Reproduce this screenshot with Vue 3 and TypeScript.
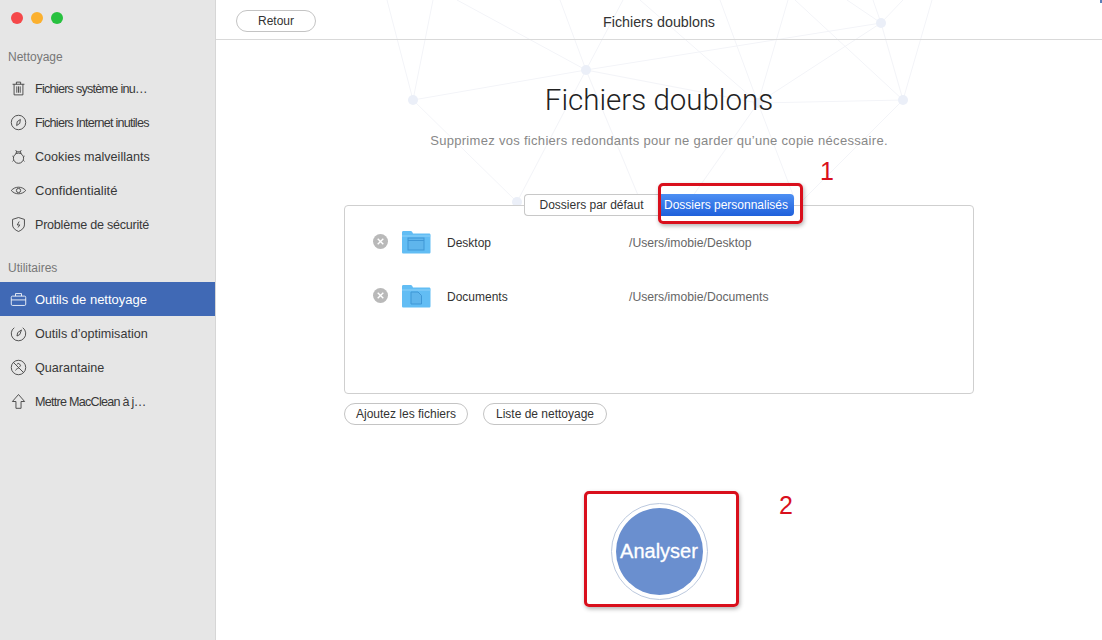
<script setup lang="ts">
interface NavItem {
  label: string
  icon: string
  fit?: string
  active?: boolean
}

const cleanItems: NavItem[] = [
  { label: 'Fichiers système inu…', icon: 'trash', fit: 'tight' },
  { label: 'Fichiers Internet inutiles', icon: 'compass', fit: 'tight' },
  { label: 'Cookies malveillants', icon: 'bug' },
  { label: 'Confidentialité', icon: 'eye', fit: 'wide' },
  { label: 'Problème de sécurité', icon: 'shield', fit: 'snug' },
]

const toolItems: NavItem[] = [
  { label: 'Outils de nettoyage', icon: 'case', active: true },
  { label: 'Outils d’optimisation', icon: 'gauge' },
  { label: 'Quarantaine', icon: 'quarantine' },
  { label: 'Mettre MacClean à j…', icon: 'up', fit: 'tight' },
]

const folders = [
  { name: 'Desktop', path: '/Users/imobie/Desktop', kind: 'desktop' },
  { name: 'Documents', path: '/Users/imobie/Documents', kind: 'doc' },
]

const nodes = [
  [413, 100], [586, 70], [881, 23], [903, 100], [758, 103], [517, 202],
]

const links = [
  [413, 100, 586, 70], [586, 70, 881, 23], [586, 70, 758, 103], [413, 100, 387, 0],
  [413, 100, 433, 0], [586, 70, 457, 0], [586, 70, 560, 0], [586, 70, 623, 0],
  [586, 70, 517, 202], [586, 70, 640, 200], [413, 100, 517, 202], [758, 103, 881, 23],
  [758, 103, 903, 100], [758, 103, 640, 0], [758, 103, 720, 0], [758, 103, 788, 0],
  [881, 23, 903, 100], [903, 100, 932, 0], [881, 23, 873, 0], [881, 23, 903, 0],
  [881, 23, 847, 0], [903, 100, 795, 0], [903, 100, 803, 200], [758, 103, 795, 200],
  [758, 103, 690, 200],
]
</script>

<template>
  <div class="window">
    <aside class="sidebar">
      <div class="lights">
        <span class="light red"></span>
        <span class="light amber"></span>
        <span class="light green"></span>
      </div>
      <h3 class="group first">Nettoyage</h3>
      <div v-for="item in cleanItems" :key="item.label" class="nav-item" :class="item.fit">
        <svg class="nav-icon" viewBox="0 0 20 20" fill="none" stroke="currentColor" stroke-width="1">
          <template v-if="item.icon === 'trash'">
            <path d="M3 5h14M7.500 5V2.500h5V5M4.800 5v12.500h10.400V5M8 7.500v7.500M10 7.500v7.500M12 7.500v7.500" />
          </template>
          <template v-else-if="item.icon === 'compass'">
            <circle cx="10" cy="10" r="8.500" />
            <path d="M12.200 6.400 11.500 11l-3.700 2.600.7-4.600z" />
          </template>
          <template v-else-if="item.icon === 'bug'">
            <circle cx="10" cy="12" r="6" />
            <path d="M7 7 7.600 4.500h4.800L13 7M6.800 2.500l1 2M13.200 2.500l-1 2M4 10.500 2.800 9.500M16 10.500l1.200-1M4.200 14.500 3 15.800M15.800 14.500l1.200 1.300" />
          </template>
          <template v-else-if="item.icon === 'eye'">
            <path d="M1.500 10C6 4.800 14 4.800 18.500 10 14 15.200 6 15.200 1.500 10z" />
            <circle cx="10" cy="10" r="2.500" />
          </template>
          <template v-else>
            <path d="M10 1.800 17 4v6.500c0 3.500-3 6-7 7.700-4-1.700-7-4.200-7-7.700V4z" />
            <path d="M10.800 6.500 8.500 10.500h3l-2 3" />
          </template>
        </svg>
        <span class="nav-label">{{ item.label }}</span>
      </div>
      <h3 class="group second">Utilitaires</h3>
      <div
        v-for="item in toolItems"
        :key="item.label"
        class="nav-item"
        :class="[item.fit, { active: item.active }]"
      >
        <svg class="nav-icon" viewBox="0 0 20 20" fill="none" stroke="currentColor" stroke-width="1">
          <template v-if="item.icon === 'case'">
            <rect x="1.500" y="6" width="17" height="11" rx="1.500" />
            <path d="M6.500 6V3h7v3M1.500 10.500h17" />
          </template>
          <template v-else-if="item.icon === 'gauge'">
            <path d="M5 3.200a8.500 8.500 0 1 0 10 0" />
            <path d="M13.500 5.800 11.500 11.200 8.200 13l.8-4z" />
          </template>
          <template v-else-if="item.icon === 'quarantine'">
            <circle cx="10" cy="10" r="8.500" />
            <path d="M4 4l12 12M8 6.500a2.200 2.200 0 1 1 3 3M6.500 13.500c.8-1.500 2-2.500 3.500-2.500" />
          </template>
          <template v-else>
            <path d="M10 1.800 2.800 10h4.200v8h6v-8h4.200z" />
          </template>
        </svg>
        <span class="nav-label">{{ item.label }}</span>
      </div>
    </aside>

    <main class="main">
      <svg class="network" viewBox="216 0 886 640" aria-hidden="true">
        <line
          v-for="(l, i) in links"
          :key="i"
          :x1="l[0]"
          :y1="l[1]"
          :x2="l[2]"
          :y2="l[3]"
          stroke="#f3f4f8"
        />
        <circle v-for="(n, i) in nodes" :key="i" :cx="n[0]" :cy="n[1]" r="5" fill="#ebeff8" />
      </svg>
      <span class="corner"></span>

      <header class="topbar">
        <button class="pill back">Retour</button>
        <span class="topbar-title">Fichiers doublons</span>
      </header>

      <section class="content">
        <h1 class="title">Fichiers doublons</h1>
        <p class="subtitle">Supprimez vos fichiers redondants pour ne garder qu’une copie nécessaire.</p>

        <div class="panel-wrap">
          <div class="tabs">
            <span class="tab">Dossiers par défaut</span>
            <span class="tab selected">Dossiers personnalisés</span>
          </div>
          <div class="panel">
            <div v-for="f in folders" :key="f.name" class="row">
              <span class="remove">
                <svg viewBox="0 0 15 15" width="15" height="15">
                  <circle cx="7.500" cy="7.500" r="7.500" fill="#b9b9b9" />
                  <path d="M4.700 4.700l5.600 5.600M10.300 4.700l-5.600 5.600" stroke="#fff" stroke-width="1.400" />
                </svg>
              </span>
              <svg class="folder" viewBox="0 0 30 24" width="30" height="24">
                <path d="M1 2.500C1 1.500 1.500 1 2.500 1h7c1 0 1.500.5 2 1.500L12 3.500h16c1 0 1.500.5 1.500 1.500v17c0 1-.5 1.500-1.500 1.500H2.500c-1 0-1.500-.5-1.500-1.500z" fill="#62bdf4" />
                <path d="M1 6h28.500" stroke="#8ed2f9" />
                <template v-if="f.kind === 'desktop'">
                  <rect x="7" y="8" width="16" height="12" fill="#5fb5ec" stroke="#3f97d6" />
                  <path d="M7 10.500h16" stroke="#3f97d6" />
                </template>
                <template v-else>
                  <path d="M10 8h7l3.500 3.500V20H10z" fill="#5fb5ec" stroke="#3f97d6" />
                </template>
              </svg>
              <span class="folder-name">{{ f.name }}</span>
              <span class="folder-path">{{ f.path }}</span>
            </div>
          </div>
        </div>

        <div class="actions">
          <button class="pill small">Ajoutez les fichiers</button>
          <button class="pill small">Liste de nettoyage</button>
        </div>

        <div class="scan-wrap">
          <button class="scan">Analyser</button>
        </div>
      </section>

      <!-- red marks drawn over the screenshot -->
      <div class="mark mark-tab"></div>
      <div class="mark mark-scan"></div>
      <span class="mark-num num-one">1</span>
      <span class="mark-num num-two">2</span>
    </main>
  </div>
</template>

<style>
html,
body {
  margin: 0;
  background: #fff;
}
</style>

<style scoped>
.window {
  display: flex;
  width: 1102px;
  height: 640px;
  overflow: hidden;
  font-family: "Liberation Sans", Arial, sans-serif;
  color: #333;
}

.sidebar {
  flex: none;
  box-sizing: border-box;
  width: 216px;
  height: 640px;
  background: #e6e6e6;
  border-right: 1px solid #d6d6d6;
}

.lights {
  display: flex;
  gap: 8px;
  padding: 12px 0 0 11px;
}

.light {
  width: 12px;
  height: 12px;
  border-radius: 50%;
}

.red { background: #f5484a; }
.amber { background: #fbb02e; }
.green { background: #27c13f; }

.group {
  margin: 0;
  padding-left: 8px;
  font-size: 12px;
  font-weight: 400;
  line-height: 14px;
  color: #777;
}

.group.first { margin: 26px 0 7px; }
.group.second { margin: 20px 0 7px; }

.nav-item {
  display: flex;
  align-items: center;
  height: 34px;
  padding-left: 10px;
  font-size: 12.600px;
  color: #383838;
}

.nav-item.tight { letter-spacing: -0.74px; }
.nav-item.snug { letter-spacing: -0.25px; }
.nav-item.wide { font-size: 13px; }

.nav-item.active {
  background: #4069b5;
  color: #fff;
  font-size: 13px;
}

.nav-icon {
  flex: none;
  width: 17px;
  height: 17px;
  margin-right: 8px;
}

.nav-label {
  margin-top: 1px;
  white-space: nowrap;
}

.main {
  position: relative;
  flex: 1;
  height: 640px;
  background: #fff;
}

.network {
  position: absolute;
  inset: 0;
  width: 886px;
  height: 640px;
}

.corner {
  position: absolute;
  top: 0;
  right: 0;
  width: 2px;
  height: 3px;
  background: #5b7fb8;
}

.topbar {
  position: relative;
  display: flex;
  align-items: center;
  justify-content: center;
  box-sizing: border-box;
  height: 40px;
  border-bottom: 1px solid #d9d9d9;
}

.topbar-title {
  font-size: 14.300px;
  margin-top: 5px;
  color: #333;
}

.pill {
  border: 1px solid #c4c4c4;
  border-radius: 11px;
  background: #fff;
  font-family: inherit;
  font-size: 12px;
  color: #333;
  padding: 0;
  white-space: nowrap;
}

.back {
  position: absolute;
  left: 20px;
  top: 10px;
  width: 80px;
  height: 22px;
}

.content {
  position: relative;
  display: flex;
  flex-direction: column;
  align-items: center;
}

.title {
  margin: 42px 0 0;
  font-family: Roboto, "Liberation Sans", sans-serif;
  font-size: 29.500px;
  font-weight: 300;
  line-height: 36px;
  color: #222;
}

.subtitle {
  margin: 13px 0 0;
  font-size: 13px;
  line-height: 20px;
  letter-spacing: 0.3px;
  color: #888;
}

.panel-wrap {
  position: relative;
  width: 630px;
  margin-top: 43px;
  padding-top: 11px;
}

.tabs {
  position: absolute;
  top: 0;
  left: 180px;
  display: flex;
  height: 22px;
  box-sizing: border-box;
  align-items: stretch;
  font-size: 12px;
}

.tab {
  display: flex;
  align-items: center;
  justify-content: center;
  box-sizing: border-box;
  width: 134px;
  background: #fff;
  border: 1px solid #c8c8c8;
  border-right: 0;
  border-radius: 4px 0 0 4px;
  color: #333;
}

.tab.selected {
  width: 136px;
  border: 0;
  border-radius: 0 4px 4px 0;
  background: linear-gradient(#4d8ff3, #1f60db);
  color: #fff;
}

.panel {
  box-sizing: border-box;
  height: 189px;
  padding-top: 10px;
  background: #fff;
  border: 1px solid #cfcfcf;
  border-radius: 4px;
}

.row {
  display: flex;
  align-items: center;
  height: 54px;
  padding-left: 28px;
  font-size: 12px;
}

.remove {
  display: flex;
  width: 15px;
  height: 15px;
  margin: -4px 13px 0 0;
}

.folder {
  flex: none;
  margin: -2px 16px 0 0;
}

.folder-name {
  width: 182px;
  color: #333;
}

.folder-path {
  font-size: 12.200px;
  color: #666;
}

.actions {
  display: flex;
  gap: 15px;
  width: 630px;
  margin-top: 9px;
}

.small {
  width: 124px;
  height: 22px;
}

.scan-wrap {
  margin-top: 78px;
}

.scan {
  display: block;
  box-sizing: border-box;
  width: 97px;
  height: 97px;
  padding: 4px;
  border: 1px solid #bcc9de;
  border-radius: 50%;
  background: #6a8fcf;
  background-clip: content-box;
  font-family: inherit;
  font-size: 20px;
  font-weight: 400;
  -webkit-text-stroke: 0.3px #fff;
  color: #fff;
}

.mark {
  position: absolute;
  box-sizing: border-box;
  border: 3px solid #d90f1c;
  border-radius: 5px;
  box-shadow: 1px 2px 4px rgba(0, 0, 0, 0.3);
}

.mark-tab {
  left: 442px;
  top: 183px;
  width: 145px;
  height: 41px;
}

.mark-scan {
  left: 368px;
  top: 491px;
  width: 155px;
  height: 116px;
}

.mark-num {
  position: absolute;
  font-size: 25px;
  line-height: 28px;
  color: #d90f1c;
}

.num-one {
  left: 604px;
  top: 157px;
}

.num-two {
  left: 563px;
  top: 491px;
}
</style>
